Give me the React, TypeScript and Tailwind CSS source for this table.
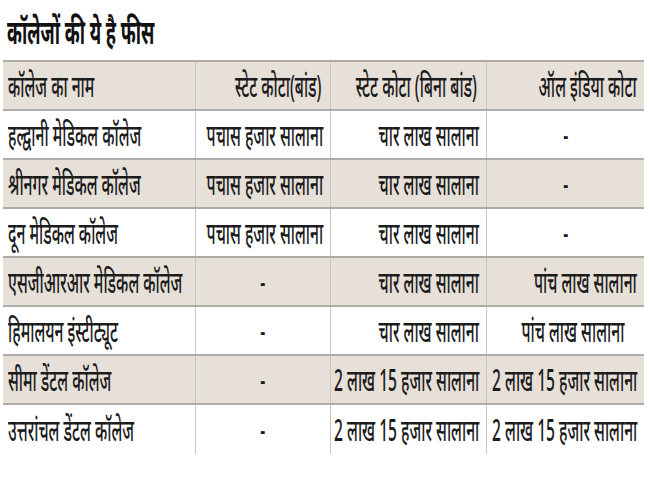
import * as React from "react";

type Align = "l" | "c" | "r";
type Cell = { t: string; a: Align; pad?: string };

const cols = ["w-[193px]", "w-[135px]", "w-[156px]", "w-[157px]"];

const header: Cell[] = [
  { t: "कॉलेज का नाम", a: "l" },
  { t: "स्टेट कोटा(बांड)", a: "r", pad: "pr-[9px]" },
  { t: "स्टेट कोटा (बिना बांड)", a: "r", pad: "pr-[9px]" },
  { t: "ऑल इंडिया कोटा", a: "r" },
];

const rows: Cell[][] = [
  [
    { t: "हल्द्वानी मेडिकल कॉलेज", a: "l" },
    { t: "पचास हजार सालाना", a: "r" },
    { t: "चार लाख सालाना", a: "r" },
    { t: "-", a: "c" },
  ],
  [
    { t: "श्रीनगर मेडिकल कॉलेज", a: "l" },
    { t: "पचास हजार सालाना", a: "r" },
    { t: "चार लाख सालाना", a: "r" },
    { t: "-", a: "c" },
  ],
  [
    { t: "दून मेडिकल कॉलेज", a: "l" },
    { t: "पचास हजार सालाना", a: "r" },
    { t: "चार लाख सालाना", a: "r" },
    { t: "-", a: "c" },
  ],
  [
    { t: "एसजीआरआर मेडिकल कॉलेज", a: "l" },
    { t: "-", a: "c" },
    { t: "चार लाख सालाना", a: "r" },
    { t: "पांच लाख सालाना", a: "r" },
  ],
  [
    { t: "हिमालयन इंस्टीट्यूट", a: "l" },
    { t: "-", a: "c" },
    { t: "चार लाख सालाना", a: "r" },
    { t: "पांच लाख सालाना", a: "c", pad: "pl-[14px]" },
  ],
  [
    { t: "सीमा डेंटल कॉलेज", a: "l" },
    { t: "-", a: "c" },
    { t: "2 लाख 15 हजार सालाना", a: "r" },
    { t: "2 लाख 15 हजार सालाना", a: "r", pad: "pr-[4px]" },
  ],
  [
    { t: "उत्तरांचल डेंटल कॉलेज", a: "l" },
    { t: "-", a: "c" },
    { t: "2 लाख 15 हजार सालाना", a: "r" },
    { t: "2 लाख 15 हजार सालाना", a: "r", pad: "pr-[4px]" },
  ],
];

const alignCls: Record<Align, string> = {
  l: "justify-start pl-[5px]",
  c: "justify-center",
  r: "justify-end pr-[7px]",
};

const originCls: Record<Align, string> = {
  l: "origin-left",
  c: "origin-center",
  r: "origin-right",
};

function Row({ cells, shaded, last }: { cells: Cell[]; shaded: boolean; last: boolean }) {
  return (
    <div
      className={`flex h-[49px] ${shaded ? "bg-[#e7e0d8]" : "bg-white"} ${
        last ? "" : "border-b-2 border-[#aeaca7]"
      }`}
    >
      {cells.map((c, i) => (
        <div
          key={i}
          className={`flex items-center ${cols[i]} ${alignCls[c.a]} ${c.pad ?? ""} ${
            i < 3 ? "border-r border-[#c9c7c3]" : ""
          }`}
        >
          <span
            className={`inline-block shrink-0 whitespace-nowrap text-[30px] leading-[36px] font-medium text-[#1b1b1b] scale-x-[0.52] ${originCls[c.a]}`}
          >
            {c.t}
          </span>
        </div>
      ))}
    </div>
  );
}

export default function App() {
  return (
    <div
      className="w-[650px] h-[480px] bg-white px-[3px] overflow-hidden"
      style={{ fontFamily: '"Noto Sans", "Liberation Sans", sans-serif' }}
    >
      <div className="h-[60px] pl-[4px] pt-[10px]">
        <span className="inline-block whitespace-nowrap text-[34px] leading-[42px] font-bold text-[#111] scale-x-[0.53] origin-left">
          कॉलेजों की ये है फीस
        </span>
      </div>
      <div className="w-[641px] border-t-2 border-[#aeaca7]">
        <Row cells={header} shaded last={false} />
        {rows.map((r, i) => (
          <Row key={i} cells={r} shaded={i % 2 === 1} last={i === rows.length - 1} />
        ))}
      </div>
    </div>
  );
}
